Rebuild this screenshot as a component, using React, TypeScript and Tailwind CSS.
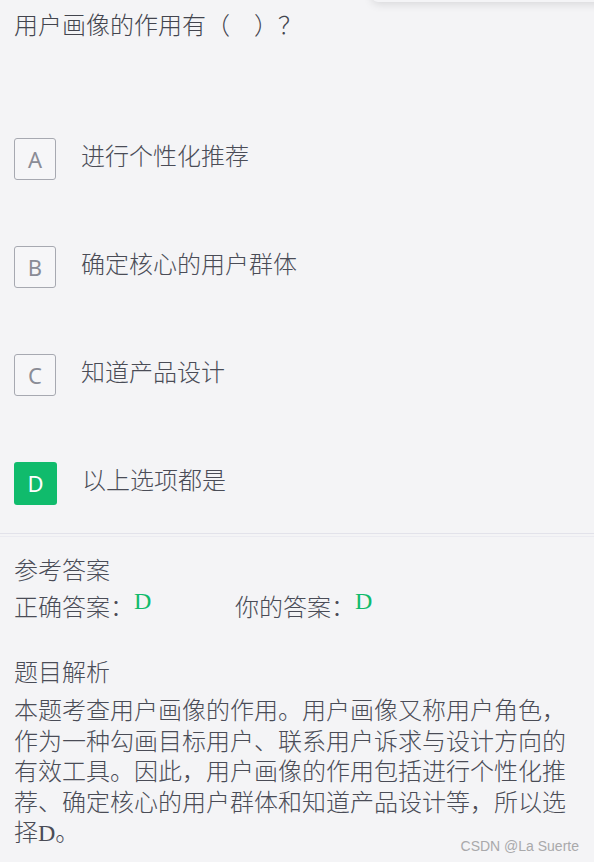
import React from "react";

const options = [
  { key: "A", text: "进行个性化推荐", active: false },
  { key: "B", text: "确定核心的用户群体", active: false },
  { key: "C", text: "知道产品设计", active: false },
  { key: "D", text: "以上选项都是", active: true },
];

export default function App() {
  return (
    <div className="relative w-[594px] h-[862px] overflow-hidden bg-[#f4f4f6] text-[#4a4c56] font-light font-['Noto_Sans_CJK_SC','Noto_Sans',sans-serif]">
      <div className="absolute left-[372px] top-[-34px] w-[260px] h-[36px] rounded-[6px] bg-[#f4f4f6] shadow-[0_2px_10px_rgba(0,0,0,0.12)]" />

      <div className="px-[14px]">
        <h1 className="pt-[8px] text-[24px] leading-[32px] font-light text-[#43454e]">
          用户画像的作用有（　）？
        </h1>

        <div className="mt-[98px] flex flex-col gap-[66px]">
          {options.map((o) => (
            <div key={o.key} className="flex items-start gap-[25px]">
              <div
                className={
                  o.active
                    ? "flex h-[43px] w-[43px] shrink-0 items-center justify-center rounded-[3px] bg-[#10bb6c] text-[22px] font-normal text-white font-['Noto_Sans',sans-serif]"
                    : "flex h-[42px] w-[42px] shrink-0 items-center justify-center rounded-[3px] border border-[#a7a9b1] bg-[#f6f6f8] text-[22px] font-normal text-[#8a8c96] font-['Noto_Sans',sans-serif]"
                }
              >
                {o.key}
              </div>
              <div className="text-[24px] leading-[34px]">{o.text}</div>
            </div>
          ))}
        </div>
      </div>

      <div className="mt-[28px] h-[4px] border-t border-b border-t-[#e2e2ea] border-b-[#ebebf1]" />

      <div className="px-[14px] pt-[13px]">
        <div className="text-[24px] leading-[37px]">参考答案</div>
        <div className="flex text-[24px] leading-[37px]">
          <div className="flex w-[221px] items-start">
            <span>正确答案：</span>
            <span className="-mt-[4px] font-normal font-['Liberation_Serif',serif] text-[24px] text-[#10bb6c]">D</span>
          </div>
          <div className="flex items-start">
            <span>你的答案：</span>
            <span className="-mt-[4px] font-normal font-['Liberation_Serif',serif] text-[24px] text-[#10bb6c]">D</span>
          </div>
        </div>

        <div className="mt-[28px] text-[24px] leading-[37px]">题目解析</div>
        <p className="mt-[5px] w-[560px] text-[24px] leading-[30.5px]">
          本题考查用户画像的作用。用户画像又称用户角色，作为一种勾画目标用户、联系用户诉求与设计方向的有效工具。因此，用户画像的作用包括进行个性化推荐、确定核心的用户群体和知道产品设计等，所以选择<span className="font-normal font-['Liberation_Serif',serif]">D</span>。
        </p>
      </div>

      <div className="absolute bottom-[7px] right-[15px] text-[14px] leading-[18px] font-normal text-[#a9a9ab] font-['Liberation_Sans',Arial,sans-serif]">
        CSDN @La Suerte
      </div>
    </div>
  );
}
